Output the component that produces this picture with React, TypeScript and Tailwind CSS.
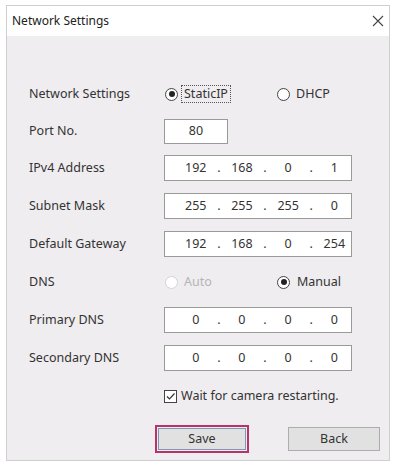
import React from "react";

function Radio({ checked, disabled }: { checked?: boolean; disabled?: boolean }) {
  return (
    <span
      className={`flex h-[13px] w-[13px] shrink-0 items-center justify-center rounded-full border bg-white ${
        disabled ? "border-[#d4d4d4]" : "border-[#444]"
      }`}
    >
      {checked && <span className="h-[6px] w-[6px] rounded-full bg-[#222]" />}
    </span>
  );
}

function IpBox({ parts }: { parts: string[] }) {
  return (
    <div className="flex h-[26px] w-[188px] items-center border border-[#9a9a9a] bg-white pl-[14px] text-[#333]">
      {parts.map((p, i) => (
        <React.Fragment key={i}>
          <span className="w-[34px] text-center">{p}</span>
          {i < 3 && <span className="w-[13px] text-center">.</span>}
        </React.Fragment>
      ))}
    </div>
  );
}

function Row({ label, h = "h-[38px]", children }: { label: string; h?: string; children: React.ReactNode }) {
  return (
    <div className={`flex items-center ${h}`}>
      <div className="w-[135px] shrink-0">{label}</div>
      <div className="flex items-center">{children}</div>
    </div>
  );
}

export default function App() {
  return (
    <div
      className="h-[465px] w-[396px] bg-white pb-[4px] pl-[6px] pr-[6px] pt-[5px] text-[12.5px] text-[#333]"
      style={{ fontFamily: '"Noto Sans", "Open Sans", sans-serif' }}
    >
      <div className="flex h-full flex-col border border-[#cfcfcf] bg-[#efedef]">
        <div className="flex h-[30px] items-center justify-between bg-white pl-[5px] pr-[5px]">
          <span className="text-[12px] text-[#222]">Network Settings</span>
          <svg width="12" height="12" viewBox="0 0 12 12">
            <path d="M1 1 L11 11 M11 1 L1 11" stroke="#444" strokeWidth="1.1" />
          </svg>
        </div>

        <div className="flex flex-col pl-[22px] pt-[39px]">
          <Row label="Network Settings">
            <div className="flex w-[113px] items-center gap-[3px] pl-[1px]">
              <Radio checked />
              <span className="border border-dotted border-[#555] px-[2px] leading-[16px]">StaticIP</span>
            </div>
            <div className="flex items-center gap-[6px]">
              <Radio />
              <span>DHCP</span>
            </div>
          </Row>
          <Row label="Port No." h="h-[36px]">
            <div className="flex h-[25px] w-[64px] items-center justify-center border border-[#9a9a9a] bg-white">80</div>
          </Row>
          <Row label="IPv4 Address">
            <IpBox parts={["192", "168", "0", "1"]} />
          </Row>
          <Row label="Subnet Mask">
            <IpBox parts={["255", "255", "255", "0"]} />
          </Row>
          <Row label="Default Gateway">
            <IpBox parts={["192", "168", "0", "254"]} />
          </Row>
          <Row label="DNS">
            <div className="flex w-[113px] items-center gap-[6px] pl-[1px]">
              <Radio disabled />
              <span className="text-[#b5b5b5]">Auto</span>
            </div>
            <div className="flex items-center gap-[7px]">
              <Radio checked />
              <span>Manual</span>
            </div>
          </Row>
          <Row label="Primary DNS">
            <IpBox parts={["0", "0", "0", "0"]} />
          </Row>
          <Row label="Secondary DNS">
            <IpBox parts={["0", "0", "0", "0"]} />
          </Row>
          <div className="flex h-[38px] items-center pl-[135px]">
            <span className="flex h-[13px] w-[13px] items-center justify-center border border-[#444] bg-white">
              <svg width="11" height="11" viewBox="0 0 11 11">
                <path d="M2 5.5 L4.5 8 L9.5 2.5" fill="none" stroke="#333" strokeWidth="1.2" />
              </svg>
            </span>
            <span className="ml-[4px]">Wait for camera restarting.</span>
          </div>
          <div className="mt-[10px] flex items-center pl-[126px]">
            <div className="border-2 border-[#b8336a] p-[1px]">
              <button className="h-[22px] w-[88px] border border-[#7a9ab8] bg-[#e1e1e1] text-[12.5px] text-[#333]">
                Save
              </button>
            </div>
            <button className="ml-[39px] h-[24px] w-[92px] border border-[#adadad] bg-[#e1e1e1] text-[12.5px] text-[#333]">
              Back
            </button>
          </div>
        </div>
      </div>
    </div>
  );
}
